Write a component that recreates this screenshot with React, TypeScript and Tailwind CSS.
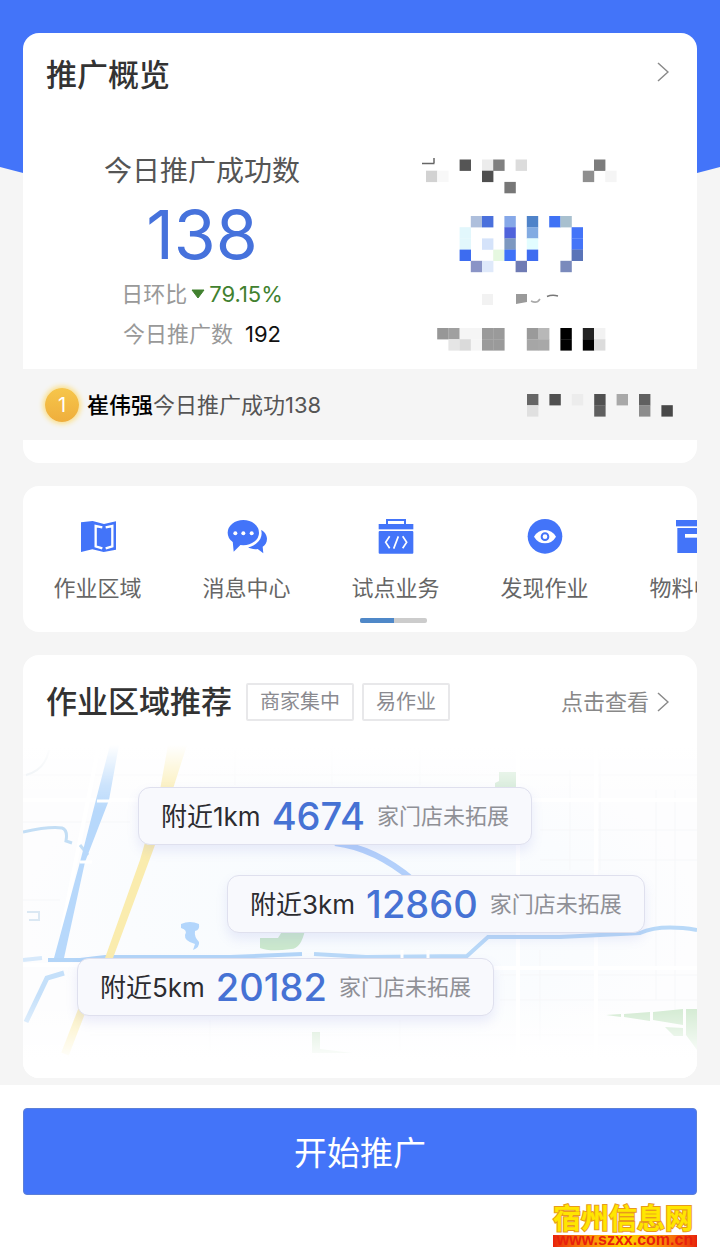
import type { ReactNode } from "react"

type Block = [col: number, row: number, color: string]

const CELL = 11.2

const labelBlocks: Block[] = [
  [3, 0, "#555555"], [5, 0, "#ececec"], [6, 0, "#808080"], [8, 0, "#dcdcdc"], [15, 0, "#7c7c7c"],
  [0, 1, "#d2d2d2"], [1, 1, "#f8f8f8"], [5, 1, "#4f4f4f"], [14, 1, "#8f8f8f"], [16, 1, "#f5f5f5"],
  [7, 2, "#777777"],
]

const numberBlocks: Block[] = [
  [4, 0, "#aebfdc"], [5, 0, "#4a70dc"], [7, 0, "#86a8e8"], [9, 0, "#4f83c9"], [11, 0, "#3f72f5"], [12, 0, "#a8c0cf"],
  [3, 1, "#e2f7fc"], [7, 1, "#4f63db"], [9, 1, "#82abe2"], [13, 1, "#4474f8"],
  [3, 2, "#e2f7fc"], [5, 2, "#d5e3fa"], [7, 2, "#7d98c0"], [9, 2, "#e2fdff"], [13, 2, "#4474f8"],
  [3, 3, "#3d6cf0"], [6, 3, "#e6f8e0"], [7, 3, "#3f72f8"], [9, 3, "#3f6cf0"], [13, 3, "#5a74b8"],
  [4, 4, "#8a94c6"], [5, 4, "#dfe9fa"], [8, 4, "#6f7bb4"], [12, 4, "#7a8abc"],
]

const totalBlocks: Block[] = [
  [1, 0, "#979797"], [2, 0, "#a0a0a0"], [3, 0, "#f5f5f5"], [4, 0, "#f5f5f5"], [5, 0, "#9a9a9a"], [6, 0, "#9a9a9a"],
  [9, 0, "#9a9a9a"], [10, 0, "#b8b8b8"], [12, 0, "#000000"], [14, 0, "#222222"], [15, 0, "#f2f2f2"],
  [2, 1, "#e5e5e5"], [3, 1, "#dadada"], [4, 1, "#f5f5f5"], [5, 1, "#9a9a9a"], [6, 1, "#9a9a9a"],
  [9, 1, "#a6a6a6"], [10, 1, "#a8a8a8"], [12, 1, "#000000"], [14, 1, "#000000"], [15, 1, "#dcdcdc"],
]

const rankBlocks: Block[] = [
  [0, 0, "#666666"], [2, 0, "#505050"], [4, 0, "#ececec"], [6, 0, "#505050"], [8, 0, "#a8a8a8"], [10, 0, "#606060"],
  [0, 1, "#e0e0e0"], [6, 1, "#5f5f5f"], [10, 1, "#8c8c8c"], [12, 1, "#484848"],
]

function Blocks({ blocks, x, y }: { blocks: Block[]; x: number; y: number }) {
  return (
    <g transform={`translate(${x} ${y})`}>
      {blocks.map(([col, row, color]) => (
        <rect key={`${col}-${row}`} x={col * CELL} y={row * CELL} width={CELL + 0.2} height={CELL + 0.2} fill={color} />
      ))}
    </g>
  )
}

function MaskedStats() {
  return (
    <svg viewBox="0 0 240 204" className="h-[204px] w-60" aria-hidden="true">
      <path d="M22 13.500H34.500M34 8V13" fill="none" stroke="#666" strokeWidth="1.500" />
      <Blocks blocks={labelBlocks} x={26} y={9.5} />
      <Blocks blocks={numberBlocks} x={26} y={66} />
      <rect x="82" y="144" width="11" height="11" fill="#f2f2f2" />
      <path d="M116 144H127V152L116 154Z" fill="#9a9a9a" />
      <path d="M131 151Q137 154 140 149" fill="none" stroke="#aaa" strokeWidth="1.500" />
      <path d="M147 146.500Q152 144.500 158 146" fill="none" stroke="#777" strokeWidth="1.500" />
      <Blocks blocks={totalBlocks} x={26} y={178} />
    </svg>
  )
}

function Chevron() {
  return (
    <svg viewBox="0 0 12 20" className="h-5 w-3" aria-hidden="true">
      <path d="M1 1L11 10L1 19" fill="none" stroke="#8a8a8a" strokeWidth="1.500" />
    </svg>
  )
}

const shortcuts: { label: string; icon: ReactNode }[] = [
  {
    label: "作业区域",
    icon: (
      <>
        <path d="M12 13L47 9L81 18L117 10V95L80 102L46 94L12 102Z" fill="#4374f9" />
        <path d="M76 28L56 24V85L76 91M86 28L106 24V85L86 91" fill="none" stroke="#fff" strokeWidth="7" />
      </>
    ),
  },
  {
    label: "消息中心",
    icon: (
      <>
        <path d="M92 32C110 32 123 48 123 62C123 74 117 82 110 86L112 106L95 93C84 95 72 92 66 87Z" fill="#4374f9" />
        <ellipse cx="54" cy="45" rx="53" ry="44" fill="#fff" />
        <ellipse cx="52" cy="44" rx="47" ry="38" fill="#4374f9" />
        <path d="M20 68L23 101L44 80Z" fill="#4374f9" />
        <circle cx="28" cy="46" r="6" fill="#fff" />
        <circle cx="52" cy="46" r="6" fill="#fff" />
        <circle cx="77" cy="46" r="6" fill="#fff" />
      </>
    ),
  },
  {
    label: "试点业务",
    icon: (
      <>
        <path d="M36 20V6H90V20" fill="none" stroke="#4374f9" strokeWidth="6" />
        <rect x="11" y="18" width="104" height="16" fill="#4374f9" />
        <rect x="11" y="39" width="104" height="68" rx="3" fill="#4374f9" />
        <path d="M44 55L32 73L44 91M70 55L56 92M83 55L95 73L83 91" fill="none" stroke="#fff" strokeWidth="5" />
      </>
    ),
  },
  {
    label: "发现作业",
    icon: (
      <>
        <circle cx="63" cy="55" r="52" fill="#4374f9" />
        <path d="M30 56Q42 36 63 36T96 56Q84 76 63 76T30 56Z" fill="#fff" />
        <circle cx="63" cy="56" r="10" fill="#fff" stroke="#4374f9" strokeWidth="6" />
      </>
    ),
  },
  {
    label: "物料中心",
    icon: (
      <>
        <rect x="9" y="6" width="108" height="19" fill="#4374f9" />
        <rect x="13" y="30" width="100" height="75" fill="#4374f9" />
        <rect x="36" y="48" width="54" height="11" fill="#fff" />
      </>
    ),
  },
]

const areas = [
  { distance: "附近1km", count: 4674, className: "ml-[115px]" },
  { distance: "附近3km", count: 12860, className: "ml-[204px] mt-[30px]" },
  { distance: "附近5km", count: 20182, className: "ml-[54px] mt-[25px]" },
]

function MapBackground() {
  return (
    <svg
      viewBox="23 745 674 333"
      preserveAspectRatio="xMidYMid slice"
      className="absolute inset-0 h-full w-full"
      aria-hidden="true"
    >
      <defs>
        <linearGradient id="fade" x1="0" y1="0" x2="0" y2="1">
          <stop offset="0" stopColor="#fff" />
          <stop offset="0.12" stopColor="#fff" stopOpacity="0.300" />
          <stop offset="0.2" stopColor="#fff" stopOpacity="0" />
          <stop offset="0.75" stopColor="#fff" stopOpacity="0" />
          <stop offset="0.95" stopColor="#fff" />
        </linearGradient>
        <radialGradient id="land">
          <stop offset="0" stopColor="#f7fbfe" />
          <stop offset="0.7" stopColor="#fafcfe" />
          <stop offset="1" stopColor="#fdfdfe" />
        </radialGradient>
      </defs>
      <rect x="23" y="745" width="674" height="333" fill="url(#land)" />
      <g fill="none" stroke="#f6f7f9" strokeWidth="1">
        <path d="M23 775H697M23 822H130M540 830H697M540 860H697M23 900H60M500 975H697M500 1000H697M90 1035H697" />
        <path d="M235 750V785M332 745V785M420 750V785M570 770V870M600 760V870M656 790V1000M675 790V1020M540 950V1040M210 1020V1050M400 1020V1050" />
      </g>
      <g fill="none" stroke="#fff" strokeWidth="4">
        <path d="M23 800H697M23 965H80M494 968H697M99 745L62 930M518 745V1078M596 745V1078" />
      </g>
      <path d="M26 775Q45 770 49 750" fill="none" stroke="#e5ebf0" strokeWidth="2" />
      <path d="M23 832Q50 826 62 828Q68 830 66 841L72 843M80 845L88 855" fill="none" stroke="#c3def5" strokeWidth="3" />
      <path d="M27 912H39V920H29" fill="none" stroke="#dbe8f3" strokeWidth="2" />
      <path d="M110 745H119L109 800L85 862L64 958H54L80 862Z" fill="#b7d8fb" />
      <path d="M97 801H111M80 862H92" stroke="#fff" strokeWidth="3" />
      <path d="M23 960L42 958" stroke="#d7e9fb" strokeWidth="4" />
      <path d="M48 960H80L105 957H230L302 954" fill="none" stroke="#b3d5f8" strokeWidth="4" />
      <path d="M314 954L366 957L467 956L488 937H560L640 933Q660 924 697 930" fill="none" stroke="#b9d9f8" strokeWidth="4" />
      <path d="M402 950V962M428 950V962" stroke="#fff" strokeWidth="3" />
      <path d="M64 973L47 978L26 1022" fill="none" stroke="#c5e0fa" strokeWidth="5" />
      <path d="M335 843Q375 848 413 880" fill="none" stroke="#b3d0fb" strokeWidth="6" />
      <path d="M168 745H187L155 845L113 958H105L140 860L160 790Z" fill="#faecae" />
      <path d="M84 1005L65 1054" stroke="#faecae" strokeWidth="8" />
      <path d="M181 924Q190 920 199 924Q200 930 195 931Q194 937 199 942Q200 947 193 950L195 944Q184 941 185 935Q188 930 181 928Z" fill="#b3d6fc" />
      <path d="M495 786V783L499 781V772H516V790H495Z" fill="#cfe8d2" />
      <path d="M283 930H305Q301 949 291 949Q270 952 260 948V938H278Z" fill="#cbe8cd" />
      <path d="M606 1015L621 1014V1017ZM624 1014L650 1012V1021L624 1017ZM653 1012L683 1009V1025L653 1020ZM665 1027L683 1028V1036H674ZM686 1009H697V1050L686 1035Z" fill="#c9e6c8" />
      <path d="M312 1032H320V1049L352 1053H312Z" fill="#c9e4c9" />
      <rect x="23" y="745" width="674" height="333" fill="url(#fade)" />
    </svg>
  )
}

function Overview() {
  return (
    <section className="overflow-hidden rounded-2xl bg-white pb-[23px]">
      <header className="flex items-start justify-between pt-[21px] pr-7 pl-[23px]">
        <h2 className="text-[31px] leading-[42px] font-medium text-[#333]">推广概览</h2>
        <button type="button" aria-label="推广概览详情" className="mt-2">
          <Chevron />
        </button>
      </header>

      <div className="mt-[54px] grid grid-cols-2 pr-[18px] pl-5">
        <div className="flex flex-col items-center">
          <p className="text-[28px] leading-[42px] text-[#555]">今日推广成功数</p>
          <p className="mt-1 mb-[2px] text-[68px] leading-[76px] text-[#4672dc]">138</p>
          <p className="flex items-center text-[22px] leading-10 text-[#999]">
            日环比
            <svg viewBox="0 0 14 10" className="mx-1 h-[10px] w-[14px]" aria-hidden="true">
              <path d="M1 1H13L7 9Z" fill="#41812f" stroke="#41812f" strokeLinejoin="round" />
            </svg>
            <span className="text-[#41812f]">79.15%</span>
          </p>
          <p className="text-[22px] leading-10 text-[#999]">
            今日推广数<span className="ml-3 text-[#111]">192</span>
          </p>
        </div>
        <div className="flex justify-center">
          <MaskedStats />
        </div>
      </div>

      <div className="mt-[15px] flex h-[71px] items-center bg-[#f5f5f5] pr-[21px] pl-[22px]">
        <span className="flex h-[34px] w-[34px] items-center justify-center rounded-full bg-linear-to-b from-[#f6c64b] to-[#efae3c] text-xl text-white shadow-[0_0_5px_2px_#fbe08a]">
          1
        </span>
        <p className="ml-2 text-[22px] leading-8 text-[#555]">
          <span className="font-medium text-black">崔伟强</span>今日推广成功138
        </p>
        <svg viewBox="0 0 150 24" className="ml-auto h-6 w-[150px]" aria-hidden="true">
          <Blocks blocks={rankBlocks} x={1} y={1} />
        </svg>
      </div>
    </section>
  )
}

function Shortcuts() {
  return (
    <nav className="overflow-hidden rounded-2xl bg-white pt-8 pb-[9px]">
      <ul className="flex">
        {shortcuts.map((item) => (
          <li key={item.label} className="w-[149px] shrink-0">
            <a href="#" className="flex flex-col items-center">
              <svg viewBox="0 0 126 108" className="h-9 w-[42px]" aria-hidden="true">
                {item.icon}
              </svg>
              <span className="mt-[18px] text-[22px] leading-8 text-[#666]">{item.label}</span>
            </a>
          </li>
        ))}
      </ul>
      <div className="mt-[14px] ml-[50%] h-[5px] w-[67px] overflow-hidden rounded-xs bg-[#ccc]">
        <div className="h-full w-1/2 bg-[#4f88c8]" />
      </div>
    </nav>
  )
}

function AreaRecommend() {
  return (
    <section className="overflow-hidden rounded-2xl bg-white pt-6">
      <header className="flex items-center pr-7 pl-[23px]">
        <h2 className="text-[31px] leading-[46px] font-medium text-[#333]">作业区域推荐</h2>
        <span className="ml-[14px] rounded-xs border-2 border-[#e8e8ea] px-3 text-xl leading-[34px] text-[#8a8a90]">
          商家集中
        </span>
        <span className="ml-2 rounded-xs border-2 border-[#e8e8ea] px-3 text-xl leading-[34px] text-[#8a8a90]">
          易作业
        </span>
        <a href="#" className="ml-auto flex items-center gap-2 text-[22px] leading-8 text-[#888]">
          点击查看
          <Chevron />
        </a>
      </header>

      <div className="relative mt-5 pt-[42px] pb-[62px]">
        <MapBackground />
        <ul className="relative flex flex-col items-start">
          {areas.map((area) => (
            <li key={area.distance} className={area.className}>
              <a
                href="#"
                className="flex h-[58px] items-center rounded-xl border border-[#dfe0ee] bg-[#f8f9fd] px-[22px] whitespace-nowrap shadow-[0_6px_12px_rgba(120,130,220,0.14)]"
              >
                <span className="text-[26px] text-[#2c2c30]">{area.distance}</span>
                <span className="mr-3 ml-[11px] text-[38px] font-medium text-[#4672d4]">{area.count}</span>
                <span className="text-[22px] text-[#8f9096]">家门店未拓展</span>
              </a>
            </li>
          ))}
        </ul>
      </div>
    </section>
  )
}

export default function App() {
  return (
    <div className="relative flex min-h-screen flex-col bg-[#f5f5f5] font-['Inter','Noto_Sans_CJK_SC',sans-serif]">
      <svg
        viewBox="0 0 720 220"
        preserveAspectRatio="none"
        className="absolute inset-x-0 top-0 h-[220px] w-full"
        aria-hidden="true"
      >
        <path d="M0 0H720V167Q360 265 0 167Z" fill="#4374f9" />
      </svg>

      <main className="relative flex flex-col gap-[23px] px-[23px] pt-[33px] pb-[7px]">
        <Overview />
        <Shortcuts />
        <AreaRecommend />
      </main>

      <footer className="relative flex-1 bg-white px-[23px] pt-[23px] pb-[9px]">
        <button
          type="button"
          className="h-[87px] w-full rounded-sm border border-[#5b7fd8] bg-[#4374f9] pt-1 text-[33px] text-white"
        >
          开始推广
        </button>
        <div className="mt-2 ml-auto w-[148px]">
          <p className="text-center text-[28px] leading-8 font-bold whitespace-nowrap text-[#ffe600] [paint-order:stroke_fill] [-webkit-text-stroke:2px_#e89a1c]">
            宿州信息网
          </p>
          <p className="ml-1 h-3 bg-linear-to-r from-[#e8200c] via-[#ffd800] to-[#e8200c] text-center font-['Liberation_Sans',sans-serif] text-base leading-[10px] font-bold text-[#e8200c]">
            www.szxx.com.cn
          </p>
        </div>
      </footer>
    </div>
  )
}
